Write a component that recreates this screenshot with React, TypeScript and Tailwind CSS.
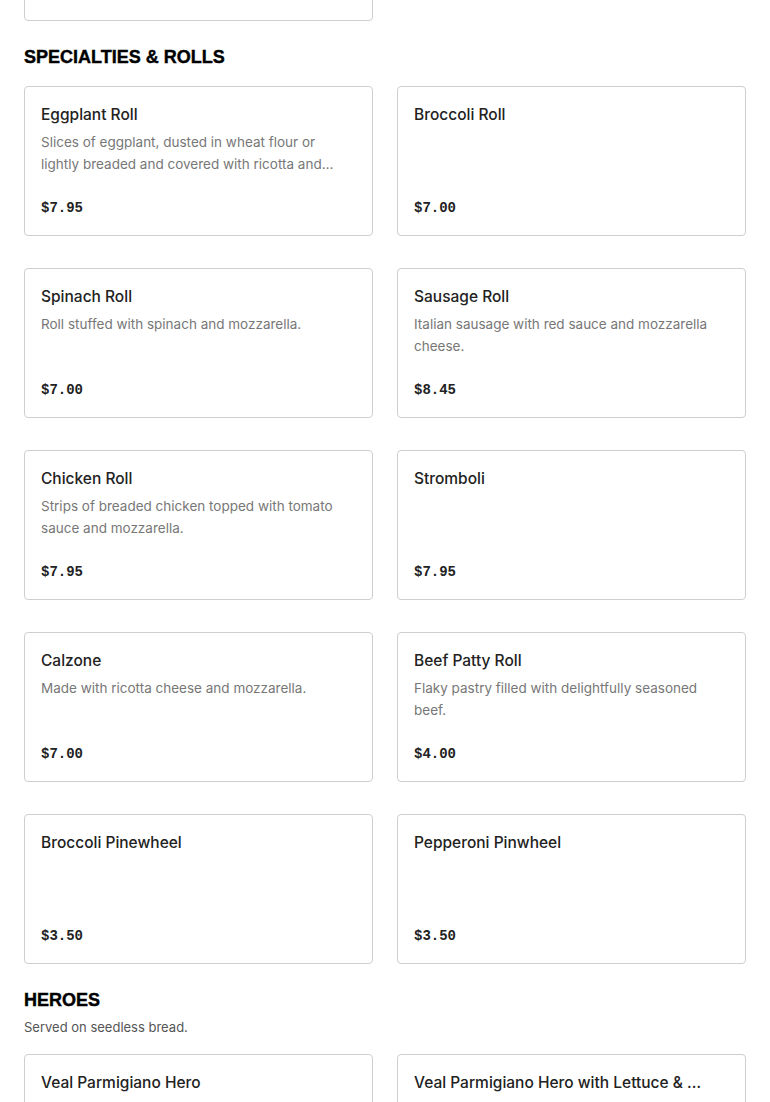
import React from "react";

type Item = { name: string; desc?: string; price: string };

const specialties: Item[] = [
  {
    name: "Eggplant Roll",
    desc: "Slices of eggplant, dusted in wheat flour or lightly breaded and covered with ricotta and mozzarella cheese, baked in a roll.",
    price: "$7.95",
  },
  { name: "Broccoli Roll", price: "$7.00" },
  { name: "Spinach Roll", desc: "Roll stuffed with spinach and mozzarella.", price: "$7.00" },
  { name: "Sausage Roll", desc: "Italian sausage with red sauce and mozzarella cheese.", price: "$8.45" },
  { name: "Chicken Roll", desc: "Strips of breaded chicken topped with tomato sauce and mozzarella.", price: "$7.95" },
  { name: "Stromboli", price: "$7.95" },
  { name: "Calzone", desc: "Made with ricotta cheese and mozzarella.", price: "$7.00" },
  { name: "Beef Patty Roll", desc: "Flaky pastry filled with delightfully seasoned beef.", price: "$4.00" },
  { name: "Broccoli Pinewheel", price: "$3.50" },
  { name: "Pepperoni Pinwheel", price: "$3.50" },
];

const heroes: Item[] = [
  { name: "Veal Parmigiano Hero", price: "$12.95" },
  { name: "Veal Parmigiano Hero with Lettuce & Tomato", price: "$13.95" },
];

function Card({ item }: { item: Item }) {
  return (
    <div className="flex h-[150px] flex-col rounded-[4px] border border-[#cfcfcf] bg-white p-4">
      <div className="truncate pr-6 text-[15.5px] font-medium leading-6 text-[#222]">{item.name}</div>
      <div className="mt-1 h-[44px] line-clamp-2 pr-4 text-[13.5px] leading-[22px] text-[#777]">
        {item.desc}
      </div>
      <div className="mt-auto font-['Liberation_Mono',monospace] text-[14px] font-bold leading-[22px] text-[#222]">
        {item.price}
      </div>
    </div>
  );
}

export default function App() {
  return (
    <div className="h-[1102px] overflow-hidden bg-white font-['Inter',sans-serif]">
      <div className="-mt-[129px] px-6">
        {/* end of previous section */}
        <div className="grid grid-cols-2 gap-x-6">
          <Card item={{ name: "Garlic Knots", desc: "", price: "$10.95" }} />
        </div>

        {/* Specialties & Rolls */}
        <h2 className="mt-6 font-['Liberation_Sans',sans-serif] text-[18px] font-black uppercase leading-6 text-black [-webkit-text-stroke:0.4px_black]">
          Specialties &amp; Rolls
        </h2>
        <div className="mt-[17px] grid grid-cols-2 gap-x-6 gap-y-8">
          {specialties.map((it) => (
            <Card key={it.name} item={it} />
          ))}
        </div>

        {/* Heroes */}
        <h2 className="mt-6 font-['Liberation_Sans',sans-serif] text-[18px] font-black uppercase leading-6 text-black [-webkit-text-stroke:0.4px_black]">
          Heroes
        </h2>
        <p className="mt-1 text-[13px] leading-[22px] text-[#555]">Served on seedless bread.</p>
        <div className="mt-4 grid grid-cols-2 gap-x-6 gap-y-8">
          {heroes.map((it) => (
            <Card key={it.name} item={it} />
          ))}
        </div>
      </div>
    </div>
  );
}
